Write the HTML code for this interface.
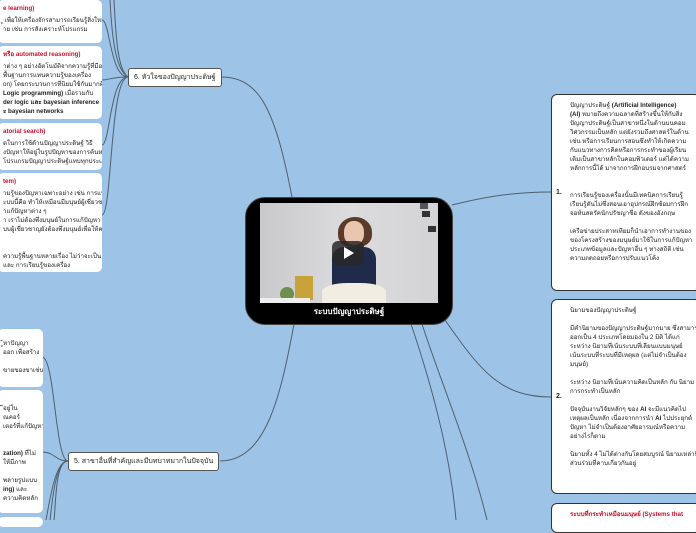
<!DOCTYPE html>
<html><head><meta charset="utf-8"><style>
*{margin:0;padding:0;box-sizing:border-box}
body{width:696px;height:520px;overflow:hidden;background:#9dc3e6;position:relative;font-family:"Liberation Sans","Noto Sans CJK SC",sans-serif;color:#222}
.b{position:absolute;background:#fff;border-radius:5px;font-size:6.2px;line-height:9px;padding:4px 5px;overflow:hidden;white-space:nowrap}
.r{color:#c8102e;font-weight:bold}
.k{font-weight:bold}
.n{position:absolute;background:#fff;border:1.5px solid #555;border-radius:3px;font-size:7px;padding:3px 5px;white-space:nowrap}
.rb{position:absolute;background:#fff;border:1px solid #333;border-radius:6px;font-size:6.2px;line-height:9px;padding:6px 8px 6px 18px;overflow:hidden;white-space:nowrap}
.rb .lbl{position:absolute;left:4px;font-weight:bold;font-size:7px}
</style></head><body>
<svg width="696" height="520" style="position:absolute;left:0;top:0" fill="none" stroke="#50606e" stroke-width="1">
<path d="M128 77 C110 77 110 20 102 20"/>
<path d="M128 77 C110 77 110 80 102 80"/>
<path d="M128 77 C110 77 110 145 102 145"/>
<path d="M128 77 C110 77 112 215 102 215"/>
<path d="M110 0 C112 40 116 70 128 77"/>
<path d="M114 0 C116 40 118 70 128 77"/>
<path d="M221 77 C260 77 275 110 292 197"/>
<path d="M68 461 C55 461 55 357 42 357"/>
<path d="M68 461 C55 461 55 452 42 452"/>
<path d="M68 461 C55 461 50 500 46 520"/>
<path d="M68 461 C55 461 52 505 50 520"/>
<path d="M68 461 C55 461 56 505 54 520"/>
<path d="M220 461 C265 461 280 400 294 324"/>
<path d="M452 205 C480 198 510 192 551 192"/>
<path d="M445 320 C480 370 500 397 551 397"/>
<path d="M411 324 C430 380 450 450 456 520"/>
<path d="M422 324 C440 380 470 450 487 520"/>
</svg>
<div class="b" style="left:-2px;top:0;width:104px;height:43px"><div class="r">e learning)</div><div style="margin-top:3px">ู เพื่อให้เครื่องจักรสามารถเรียนรู้สิ่งใหม่ ๆ<br>าย เช่น การสังเคราะห์โปรแกรม</div></div>
<div class="b" style="left:-2px;top:46px;width:104px;height:73px"><div class="r">หรือ automated reasoning)</div><div style="margin-top:3px">าต่าง ๆ อย่างอัตโนมัติจากความรู้ที่มีอยู่ใน<br>พื้นฐานการแทนความรู้ของเครื่อง<br>on) โดยกระบวนการที่นิยมใช้กันมากคือ<br><span class="k">Logic programming)</span> เมื่อรวมกับ<br><span class="k">der logic และ bayesian inference</span><br><span class="k">ะ bayesian networks</span></div></div>
<div class="b" style="left:-2px;top:123px;width:104px;height:47px"><div class="r">atorial search)</div><div style="margin-top:3px">ตในการใช้ด้านปัญญาประดิษฐ์ วิธี<br>งปัญหาให้อยู่ในรูปปัญหาของการค้นหา<br>โปรแกรมปัญญาประดิษฐ์แทบทุกประเภท</div></div>
<div class="b" style="left:-2px;top:173px;width:104px;height:99px"><div class="r">tem)</div><div style="margin-top:3px">ามรู้ของปัญหาเฉพาะอย่าง เช่น การแพทย์<br>ะบบนี้คือ ทำให้เหมือนมีมนุษย์ผู้เชี่ยวชาญ<br>าแก้ปัญหาต่าง ๆ<br>า เราไม่ต้องพึ่งมนุษย์ในการแก้ปัญหา แต่<br>บบผู้เชี่ยวชาญยังต้องพึ่งมนุษย์เพื่อให้ความ<br><br><br>ความรู้พื้นฐานหลายเรื่อง ไม่ว่าจะเป็น<br>และ การเรียนรู้ของเครื่อง</div></div>
<div class="b" style="left:-2px;top:329px;width:45px;height:58px;padding-top:10px">ู้หาปัญญา<br>ออก เพื่อสร้าง<br><br>ขายของขาเช่น</div>
<div class="b" style="left:-2px;top:390px;width:45px;height:123px;padding-top:14px">ีอยู่ใน<br>ณคอร์<br>เตอร์ที่แก้ปัญหา<br><br><br><span class="k">zation)</span> ที่ไม่<br>ให้มีภาพ<br><br>พลายรูปแบบ<br><span class="k">ing)</span> และ<br>ความคิดหลัก</div>
<div class="b" style="left:-2px;top:517px;width:45px;height:10px"></div>
<div class="n" style="left:128px;top:68px">6. หัวใจของปัญญาประดิษฐ์</div>
<div class="n" style="left:68px;top:452px">5. สาขาอื่นที่สำคัญและมีบทบาทมากในปัจจุบัน</div>
<div style="position:absolute;left:245px;top:197px;width:208px;height:128px;background:#000;border-radius:20px;border:1px solid #444"></div>
<div style="position:absolute;left:260px;top:203px;width:178px;height:100px;background:linear-gradient(90deg,#c9c9cb,#dcdcde 50%,#d3d3d5);overflow:hidden">
 <div style="position:absolute;left:78px;top:14px;width:34px;height:30px;border-radius:50% 50% 40% 40%;background:#5a3b2a"></div>
 <div style="position:absolute;left:84px;top:18px;width:20px;height:24px;border-radius:45%;background:#e9c6b0"></div>
 <div style="position:absolute;left:72px;top:44px;width:44px;height:50px;border-radius:12px 12px 4px 4px;background:#202a4a"></div>
 <div style="position:absolute;left:62px;top:80px;width:64px;height:22px;border-radius:40% 40% 0 0;background:#f1ede2"></div>
 <div style="position:absolute;left:35px;top:73px;width:18px;height:24px;background:#c7a33a"></div>
 <div style="position:absolute;left:20px;top:84px;width:14px;height:14px;border-radius:50%;background:#6f8f4f"></div>
 <div style="position:absolute;left:0;top:95px;width:50px;height:5px;background:#eee"></div>
 <div style="position:absolute;left:160px;top:0;width:8px;height:6px;background:#555"></div>
 <div style="position:absolute;left:162px;top:8px;width:8px;height:6px;background:#333"></div>
 <div style="position:absolute;left:168px;top:23px;width:8px;height:6px;background:#333"></div>
 <div style="position:absolute;left:72px;top:38px;width:32px;height:24px;border-radius:6px;background:rgba(40,40,40,.85)"></div>
 <div style="position:absolute;left:84px;top:44px;width:0;height:0;border-left:10px solid #fff;border-top:6px solid transparent;border-bottom:6px solid transparent"></div>
</div>
<div style="position:absolute;left:245px;top:305px;width:208px;text-align:center;color:#fff;font-size:8px;font-weight:bold">ระบบปัญญาประดิษฐ์</div>
<div class="rb" style="left:551px;top:94px;width:150px;height:197px"><span class="lbl" style="top:93px">1.</span>ปัญญาประดิษฐ์ <span class="k">(Artificial Intelligence)</span><br><span class="k">(AI)</span> หมายถึงความฉลาดที่สร้างขึ้นให้กับสิ่ง<br>ปัญญาประดิษฐ์เป็นสาขาหนึ่งในด้านบนคอม<br>วิศวกรรมเป็นหลัก แต่ยังรวมถึงศาสตร์ในด้าน<br>เช่น หรือการเรียนการสอนซึ่งทำให้เกิดความ<br>กับแนวทางการคิดหรือการกระทำของผู้เรียน<br>เดิมเป็นสาขาหลักในคอมพิวเตอร์ แต่ได้ความ<br>หลักการนี้ได้ มาจากการฝึกอบรมจากศาสตร์<br><br><br>การเรียนรู้ของเครื่องนั้นมีเทคนิคการเรียนรู้<br>เรียนรู้ดันไม่ซึ่งสอนเอาอุปกรณ์ฝึกซ้อมการฝึก<br>จอห์นสตรัคนักปรัชญาชื่อ ดังของอังกฤษ<br><br>เครือข่ายประสาทเทียมก็นำเอาการทำงานของ<br>ของโครงสร้างของมนุษย์มาใช้ในการแก้ปัญหา<br>ประเภทข้อมูลและปัญหาอื่น ๆ ทางสถิติ เช่น<br>ความถดถอยหรือการปรับแนวโค้ง</div>
<div class="rb" style="left:551px;top:299px;width:150px;height:195px"><span class="lbl" style="top:92px">2.</span>นิยามของปัญญาประดิษฐ์<br><br>มีคำนิยามของปัญญาประดิษฐ์มากมาย ซึ่งสามารถ<br>ออกเป็น 4 ประเภทโดยมองใน 2 มิติ ได้แก่<br>ระหว่าง นิยามที่เน้นระบบที่เลียนแบบมนุษย์<br>เน้นระบบที่ระบบที่มีเหตุผล (แต่ไม่จำเป็นต้อง<br>มนุษย์)<br><br>ระหว่าง นิยามที่เน้นความคิดเป็นหลัก กับ นิยาม<br>การกระทำเป็นหลัก<br><br>ปัจจุบันงานวิจัยหลักๆ ของ <span class="k">AI</span> จะมีแนวคิดไป<br>เหตุผลเป็นหลัก เนื่องจากการนำ <span class="k">AI</span> ไปประยุกต์<br>ปัญหา ไม่จำเป็นต้องอาศัยอารมณ์หรือความ<br>อย่างไรก็ตาม<br><br>นิยามทั้ง 4 ไม่ได้ต่างกันโดยสมบูรณ์ นิยามเหล่านี้<br>ส่วนร่วมที่คาบเกี่ยวกันอยู่</div>
<div class="rb" style="left:551px;top:503px;width:150px;height:30px"><span class="r">ระบบที่กระทำเหมือนมนุษย์ (Systems that</span></div>
</body></html>
